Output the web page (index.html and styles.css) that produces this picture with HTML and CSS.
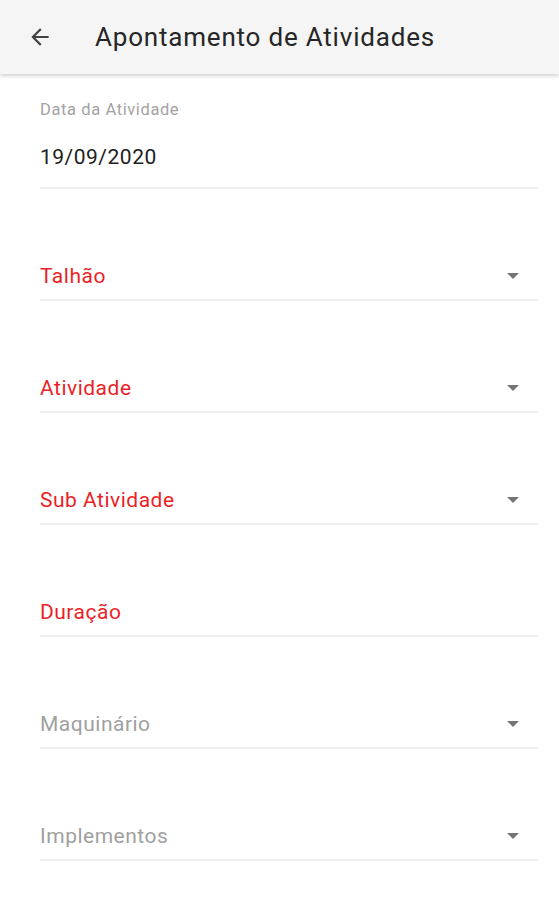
FILE: index.html
```html
<!DOCTYPE html>
<html lang="pt">
<head>
    <meta charset="UTF-8">
    <meta name="viewport" content="width=device-width, initial-scale=1.0">
    <title>Apontamento de Atividades</title>
    <link rel="stylesheet" href="styles.css">
</head>
<body>
    <header class="app-bar">
        <svg class="back" width="26" height="26" viewBox="0 0 24 24">
            <path d="M20 11H7.83l5.59-5.59L12 4l-8 8 8 8 1.41-1.41L7.83 13H20v-2z" fill="#424242"/>
        </svg>
        <h1>Apontamento de Atividades</h1>
    </header>

    <main class="form">
        <div class="field date-field">
            <div class="small-label">Data da Atividade</div>
            <div class="value">19/09/2020</div>
        </div>

        <div class="field select required">
            <span class="label">Talhão</span>
            <svg class="caret" width="12" height="6" viewBox="0 0 10 5"><polygon points="0,0 10,0 5,5" fill="#757575"/></svg>
        </div>

        <div class="field select required">
            <span class="label">Atividade</span>
            <svg class="caret" width="12" height="6" viewBox="0 0 10 5"><polygon points="0,0 10,0 5,5" fill="#757575"/></svg>
        </div>

        <div class="field select required">
            <span class="label">Sub Atividade</span>
            <svg class="caret" width="12" height="6" viewBox="0 0 10 5"><polygon points="0,0 10,0 5,5" fill="#757575"/></svg>
        </div>

        <div class="field select required">
            <span class="label">Duração</span>
        </div>

        <div class="field select">
            <span class="label">Maquinário</span>
            <svg class="caret" width="12" height="6" viewBox="0 0 10 5"><polygon points="0,0 10,0 5,5" fill="#757575"/></svg>
        </div>

        <div class="field select">
            <span class="label">Implementos</span>
            <svg class="caret" width="12" height="6" viewBox="0 0 10 5"><polygon points="0,0 10,0 5,5" fill="#757575"/></svg>
        </div>
    </main>
</body>
</html>
```

FILE: styles.css
```css
body {
    margin: 0;
    font-family: Roboto, 'Noto Sans', sans-serif;
    background-color: #fff;
    color: #212121;
}

.app-bar {
    height: 74px;
    display: flex;
    align-items: center;
    background-color: #f5f5f5;
    box-shadow: 0 2px 4px rgba(0, 0, 0, 0.18);
    position: relative;
}

.back {
    margin-left: 27px;
    margin-right: 42px;
}

.app-bar h1 {
    margin: 0;
    font-size: 26px;
    font-weight: 400;
    letter-spacing: 0.8px;
    color: #262626;
}

.form {
    padding: 0 21px 0 40px;
}

.field {
    border-bottom: 2px solid #eeeeee;
}

.date-field {
    padding: 26px 0 16px;
}

.small-label {
    font-size: 16.5px;
    line-height: 20px;
    letter-spacing: 0.6px;
    color: #a3a3a3;
}

.value {
    margin-top: 23px;
    font-size: 21px;
    line-height: 28px;
    letter-spacing: 0.5px;
    color: #212121;
}

.select {
    display: flex;
    align-items: center;
    justify-content: space-between;
    padding: 73px 0 9px;
    height: 28px;
}

.label {
    font-size: 21px;
    line-height: 28px;
    letter-spacing: 0.5px;
    color: #a0a0a0;
}

.required .label {
    color: #ec1f27;
}

.caret {
    margin-right: 19px;
}
```
